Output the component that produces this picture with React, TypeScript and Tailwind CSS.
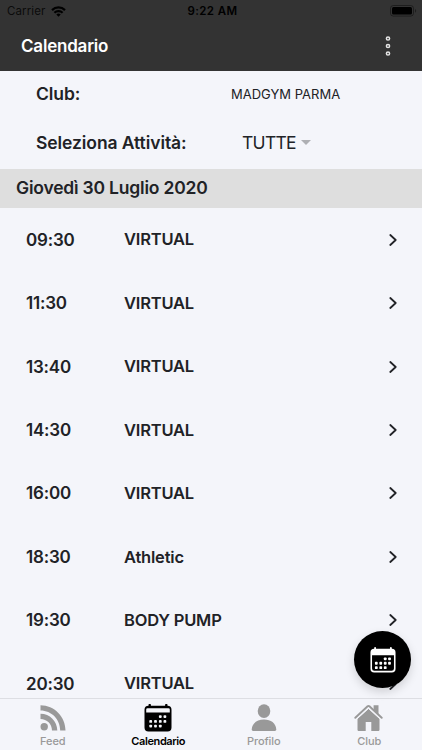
import React from "react";

interface Lesson {
  time: string;
  name: string;
}

const lessons: Lesson[] = [
  { time: "09:30", name: "VIRTUAL" },
  { time: "11:30", name: "VIRTUAL" },
  { time: "13:40", name: "VIRTUAL" },
  { time: "14:30", name: "VIRTUAL" },
  { time: "16:00", name: "VIRTUAL" },
  { time: "18:30", name: "Athletic" },
  { time: "19:30", name: "BODY PUMP" },
  { time: "20:30", name: "VIRTUAL" },
];

// Columns and rows of the small day squares
const days = [
  [15.6, 11.4], [20.2, 11.4],
  [6, 16.2], [10.8, 16.2], [15.6, 16.2], [20.2, 16.2],
  [6, 20.9], [10.8, 20.9], [15.6, 20.9],
];

const CalendarSolid = () => (
  <svg viewBox="0 0 28 28" className="h-7 w-7">
    <path
      fillRule="evenodd"
      fill="#000"
      d="M4.5 1.8V1a1.2 1.2 0 0 1 2.4 0v.8h14.2V1a1.2 1.2 0 0 1 2.4 0v.8a4 4 0 0 1 4 4V23.500a4 4 0 0 1-4 4h-19a4 4 0 0 1-4-4V5.800a4 4 0 0 1 4-4zM3.600 4.200a1.400 1.400 0 0 0-1.400 1.400v2.800h23.600v-2.800a1.400 1.400 0 0 0-1.400-1.400z"
    />
    {days.map(([x, y]) => (
      <rect key={`${x}-${y}`} x={x - 0.7} y={y - 0.2} width="2.8" height="2.8" rx="0.9" fill="#f4f5fa" />
    ))}
  </svg>
);

const CalendarOutline = () => (
  <svg viewBox="0 0 28 28" className="h-[26px] w-[26px]">
    <path
      fillRule="evenodd"
      fill="#fff"
      d="M4.500 2V1a1 1 0 0 1 2 0v1h15V1a1 1 0 0 1 2 0v1a4 4 0 0 1 4 4v17.500a4 4 0 0 1-4 4h-19a4 4 0 0 1-4-4V6a4 4 0 0 1 4-4zM2.200 9v14.200a2.500 2.500 0 0 0 2.500 2.500h18.600a2.500 2.500 0 0 0 2.500-2.500V9z"
    />
    {days.map(([x, y]) => (
      <rect key={`${x}-${y}`} x={x - 0.7} y={y - 0.2} width="3" height="3" rx="0.9" fill="#fff" />
    ))}
  </svg>
);

const FeedIcon = () => (
  <svg viewBox="0 0 26 26" className="ml-px h-[26px] w-[26px]" fill="#999">
    <circle cx="4.2" cy="21.8" r="3.7" />
    <path d="M.5 8.700v5.300c6.400 0 11.500 5.100 11.500 11.500h5.300C17.300 16.200 9.800 8.700.5 8.700z" />
    <path d="M.5.2v5.300c11 0 19.700 8.900 19.700 20h5.300C25.500 11.500 14.300.2.500.2z" />
  </svg>
);

const ProfileIcon = () => (
  <svg viewBox="0 0 26 28" className="h-7 w-[26px]" fill="#999">
    <ellipse cx="13" cy="7.1" rx="6.3" ry="6.9" />
    <path d="M.7 25.400C1.200 19.200 6 15.600 13 15.600s11.800 3.600 12.300 9.800c.1 1-.5 1.600-1.500 1.600H2.200c-1 0-1.600-.6-1.500-1.600z" />
  </svg>
);

const HomeIcon = () => (
  <svg viewBox="0 0 29 28" className="mr-px h-7 w-[29px]" fill="#999">
    <path d="M14.500 4.700 3.500 14.700V25.500c0 1 .6 1.500 1.500 1.500h6.700v-9h5.600v9H24c.9 0 1.500-.5 1.500-1.500V14.700z" />
    {/* gap between the roof line and the walls */}
    <path d="M2.600 15.200 14.500 4.400l11.900 10.800" fill="none" stroke="#f4f5fa" strokeWidth="1" />
    <path d="M19.600 1.300h4.900v9l-4.900-4.500z" />
    <path
      d="M1.300 13.800 13.600 2.300q.9-.8 1.800 0l12.300 11.500"
      fill="none"
      stroke="#999"
      strokeWidth="1.9"
      strokeLinecap="round"
    />
  </svg>
);

const StatusBar = () => (
  <div className="grid h-[22px] grid-cols-[1fr_auto_1fr] items-center pl-[7px] pr-[5px] text-[11.5px] leading-none text-black">
    <div className="flex items-center gap-1.5">
      <span className="pt-0.5 tracking-[0.1px] text-black/80">Carrier</span>
      <svg viewBox="0 0 15 11" className="h-[11px] w-[15px]" fill="none" stroke="#000" strokeWidth="2.2">
        <path d="M1 4.100a9.300 9.300 0 0 1 13 0" />
        <path d="M3.400 6.700a5.900 5.900 0 0 1 8.200 0" />
        <path d="m7.500 10.700-2.200-2.200a3.200 3.200 0 0 1 4.400 0z" fill="#000" stroke="none" />
      </svg>
    </div>
    <span className="pl-px pt-px text-center font-semibold tracking-[0.4px]">9:22 AM</span>
    <svg viewBox="0 0 27 12" className="h-3 w-[27px] justify-self-end">
      <rect x="0.5" y="0.5" width="23" height="10.6" rx="2.8" fill="none" stroke="#000" strokeOpacity="0.4" />
      <rect x="2" y="2" width="20" height="7.6" rx="1.5" fill="#000" />
      <path d="M25 4v3.800c1.600-.5 1.600-3.300 0-3.800z" fill="#000" fillOpacity="0.4" />
    </svg>
  </div>
);

const tabs = [
  { label: "Feed", icon: <FeedIcon /> },
  { label: "Calendario", icon: <CalendarSolid />, active: true },
  { label: "Profilo", icon: <ProfileIcon /> },
  { label: "Club", icon: <HomeIcon /> },
];

export default function App() {
  return (
    <div className="relative flex h-[750px] w-[422px] flex-col overflow-hidden bg-[#f4f5fa] font-['Inter','Liberation_Sans',sans-serif] text-[#212226]">
      <header className="h-[71px] shrink-0 bg-[#333]">
        <StatusBar />
        <div className="flex h-12 items-center justify-between pl-[21px] pr-[31px]">
          <h1 className="pt-px text-[17px] font-semibold tracking-[-0.2px] text-white">Calendario</h1>
          <svg viewBox="0 0 6 20" className="h-5 w-1.5" fill="none" stroke="#e5e5e5" strokeWidth="1.5">
            <circle cx="3" cy="2.5" r="1.6" />
            <circle cx="3" cy="10" r="1.6" />
            <circle cx="3" cy="17.5" r="1.6" />
          </svg>
        </div>
      </header>

      <section className="h-[98px] shrink-0 pl-9">
        <div className="flex h-[46px] items-center">
          <span className="w-[195px] text-[17.5px] font-semibold tracking-[-0.1px]">Club:</span>
          <span className="pt-0.5 text-[13px]">MADGYM PARMA</span>
        </div>
        <div className="flex h-[52px] items-center">
          <span className="w-[206px] text-[17.5px] font-semibold tracking-[-0.08px]">Seleziona Attività:</span>
          <span className="text-[17.5px] tracking-[-0.7px]">TUTTE</span>
          <svg viewBox="0 0 10 5" className="mb-0.5 ml-[5px] h-[5px] w-2.5" fill="#aeafb3">
            <path d="M0 0h10L5 5z" />
          </svg>
        </div>
      </section>

      <h2 className="flex h-[39px] shrink-0 items-center bg-[#dedede] pl-4 text-[17.5px] font-semibold tracking-[-0.2px]">
        Giovedì 30 Luglio 2020
      </h2>

      <main className="min-h-0 flex-1 overflow-hidden">
        {lessons.map((lesson) => (
          <div key={lesson.time} className="flex h-[63.45px] items-center pl-[26px] pr-[25px] font-semibold">
            <span className="w-[98px] pt-[1.5px] text-[17px] tracking-[-0.2px]">{lesson.time}</span>
            <span className="flex-1 text-[16.5px] tracking-[-0.2px]">{lesson.name}</span>
            <svg viewBox="0 0 8 12" className="h-3 w-2" fill="none" stroke="#212226" strokeWidth="1.8" strokeLinecap="round" strokeLinejoin="round">
              <path d="m1.300 1 5.400 5-5.400 5" />
            </svg>
          </div>
        ))}
      </main>

      <nav className="grid h-[52px] shrink-0 grid-cols-4 border-t border-[#dddee3]">
        {tabs.map((tab) => (
          <div
            key={tab.label}
            className={`flex flex-col items-center text-[11px] ${
              tab.active
                ? "font-semibold tracking-[-0.4px] text-black"
                : "font-medium tracking-[-0.1px] text-[#999]"
            }`}
          >
            <div className="mt-1 flex h-[29px] items-center">{tab.icon}</div>
            <span className="mt-0.5 leading-[14px]">{tab.label}</span>
          </div>
        ))}
      </nav>

      {/* Floating button over the list */}
      <button className="absolute left-[354px] top-[631px] flex h-[57px] w-[57px] items-center justify-center rounded-full bg-black shadow-[0_4px_10px_rgba(0,0,0,0.15)]">
        <CalendarOutline />
      </button>
    </div>
  );
}
